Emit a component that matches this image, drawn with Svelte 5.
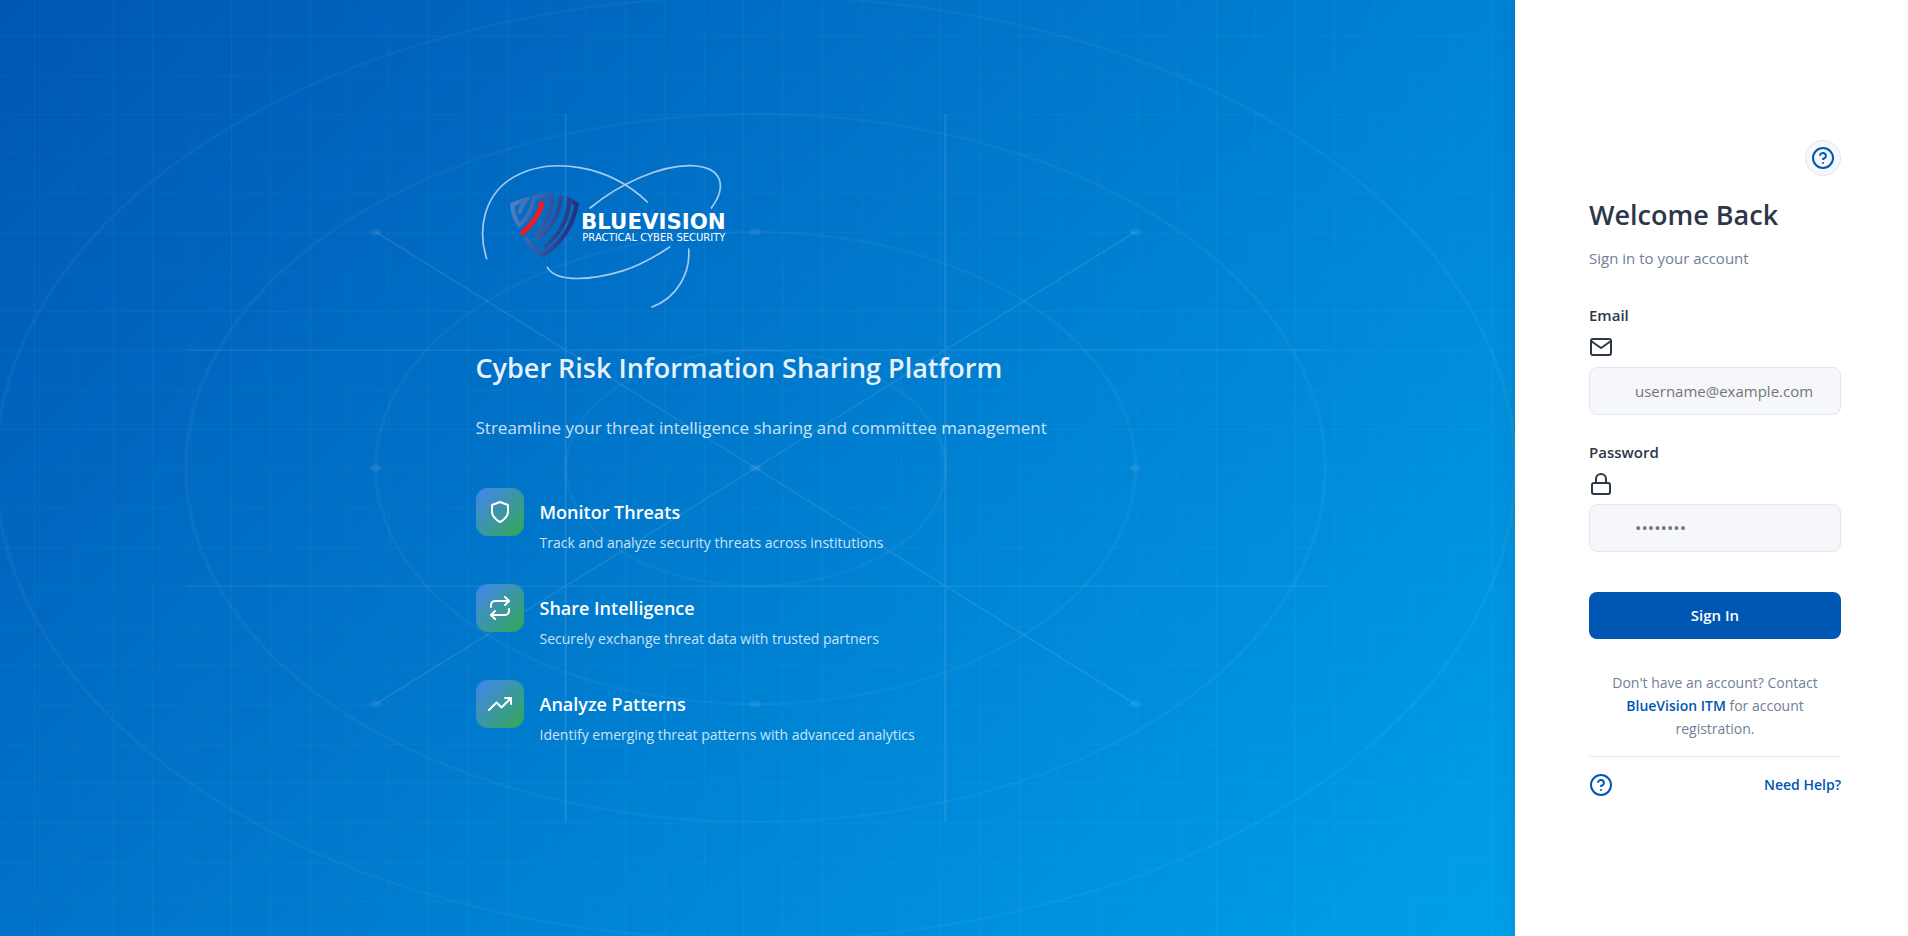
<script>
  const columns = Array.from({ length: 38 }, (_, i) => 34.5 + i * 39.4);
  const rows = Array.from({ length: 23 }, (_, i) => 36 + i * 39.35);
  const nodes = [200, 400, 600].flatMap((y) => [200, 400, 600].map((x) => ({ x, y })));

  const features = [
    {
      title: 'Monitor Threats',
      text: 'Track and analyze security threats across institutions',
      paths: ['M12 22s8-4 8-10V5l-8-3-8 3v7c0 6 8 10 8 10z']
    },
    {
      title: 'Share Intelligence',
      text: 'Securely exchange threat data with trusted partners',
      paths: ['M17 1l4 4-4 4', 'M3 11V9a4 4 0 0 1 4-4h14', 'M7 23l-4-4 4-4', 'M21 13v2a4 4 0 0 1-4 4H3']
    },
    {
      title: 'Analyze Patterns',
      text: 'Identify emerging threat patterns with advanced analytics',
      paths: ['M23 6l-9.500 9.500-5-5L1 18', 'M17 6h6v6']
    }
  ];

  let email = $state('');
  let password = $state('');
</script>

{#snippet helpIcon()}
  <svg class="icon" viewBox="0 0 24 24" aria-hidden="true">
    <circle cx="12" cy="12" r="10" />
    <path d="M9.090 9a3 3 0 0 1 5.830 1c0 2-3 3-3 3" />
    <path d="M12 17h.01" />
  </svg>
{/snippet}

<div class="page">
  <section class="brand">
    <svg class="grid" viewBox="0 0 1515 936" preserveAspectRatio="none" aria-hidden="true">
      {#each columns as x}
        <line x1={x} x2={x} y1="0" y2="936" />
      {/each}
      {#each rows as y}
        <line x1="0" x2="1515" y1={y} y2={y} />
      {/each}
    </svg>
    <svg class="radar" viewBox="0 0 800 800" preserveAspectRatio="none" aria-hidden="true">
      <g class="rings">
        <circle cx="400" cy="400" r="100" />
        <circle cx="400" cy="400" r="200" />
        <circle cx="400" cy="400" r="300" />
        <circle cx="400" cy="400" r="400" />
      </g>
      <path class="rays" d="M100 300H700M100 500H700M300 100V700M500 100V700M200 200L600 600M600 200L200 600" />
      {#each nodes as node}
        <circle class="node" cx={node.x} cy={node.y} r="3" />
      {/each}
    </svg>

    <div class="intro">
      <svg class="logo" viewBox="48 48 765 480" role="img" aria-label="BlueVision">
        <defs>
          <linearGradient id="shield" gradientUnits="userSpaceOnUse" x1="155" y1="220" x2="350" y2="260">
            <stop offset="0" stop-color="#4a7fc4" />
            <stop offset="0.500" stop-color="#3558a2" />
            <stop offset="1" stop-color="#262a78" />
          </linearGradient>
        </defs>
        <g class="orbits">
          <path d="M80 356C52 270 72 170 150 118C270 42 450 78 562 186" />
          <path d="M390 204C480 130 600 76 692 77C795 80 798 145 754 204" />
          <path d="M262 382C290 430 400 420 490 392C545 374 595 344 629 321" />
          <path d="M686 327C692 400 650 474 576 501" />
        </g>
        <g class="bands">
          <path d="M179 222Q178 214 184 203L199 179Q175 185 157 195Q160 232 178 256Q212 228 223 172Q252 166 276 170Q274 232 229 288" />
          <path d="M302 168Q298 246 229 301" />
          <path d="M195 292Q216 323 250 346Q334 288 350 192Q338 185 327 180Q324 266 250 324" />
        </g>
        <path class="slash" d="M248 184Q236 238 183 283" />
        <text class="wordmark" x="363" y="267">BLUEVISION</text>
        <text class="tagline" x="367" y="303">PRACTICAL CYBER SECURITY</text>
      </svg>

      <h1>Cyber Risk Information Sharing Platform</h1>
      <p class="lead">Streamline your threat intelligence sharing and committee management</p>

      <ul class="features">
        {#each features as feature}
          <li>
            <span class="tile">
              <svg class="icon" viewBox="0 0 24 24" aria-hidden="true">
                {#each feature.paths as d}
                  <path {d} />
                {/each}
              </svg>
            </span>
            <div class="copy">
              <h2>{feature.title}</h2>
              <p>{feature.text}</p>
            </div>
          </li>
        {/each}
      </ul>
    </div>
  </section>

  <main class="login">
    <button class="help" type="button" aria-label="Help">{@render helpIcon()}</button>
    <h2 class="welcome">Welcome Back</h2>
    <p class="subtitle">Sign in to your account</p>

    <form onsubmit={(event) => event.preventDefault()}>
      <div class="field">
        <label for="email">Email</label>
        <svg class="icon" viewBox="0 0 24 24" aria-hidden="true">
          <path d="M4 4h16c1.100 0 2 .9 2 2v12c0 1.100-.9 2-2 2H4c-1.100 0-2-.9-2-2V6c0-1.100.9-2 2-2z" />
          <path d="M22 6l-10 7L2 6" />
        </svg>
        <input id="email" type="email" placeholder="username@example.com" bind:value={email} />
      </div>
      <div class="field">
        <label for="password">Password</label>
        <svg class="icon" viewBox="0 0 24 24" aria-hidden="true">
          <rect x="3" y="11" width="18" height="11" rx="2" />
          <path d="M7 11V7a5 5 0 0 1 10 0v4" />
        </svg>
        <input id="password" type="password" placeholder="••••••••" bind:value={password} />
      </div>
      <button class="submit" type="submit">Sign In</button>
    </form>

    <p class="register">
      Don't have an account? Contact <a href="#contact">BlueVision ITM</a> for account registration.
    </p>
    <footer>
      {@render helpIcon()}
      <a href="#help">Need Help?</a>
    </footer>
  </main>
</div>

<style>
  :global(body) {
    margin: 0;
  }

  .page {
    display: flex;
    min-height: 100vh;
    background: #fff;
    color: #2d3748;
    font-family: 'Open Sans', 'Noto Sans', sans-serif;
  }

  h1,
  h2,
  p,
  ul {
    margin: 0;
    padding: 0;
  }

  h1,
  h2 {
    font-weight: 600;
  }

  a {
    color: #0056b3;
    font-weight: 600;
    text-decoration: none;
  }

  .icon {
    display: block;
    flex: none;
    width: 24px;
    height: 24px;
    fill: none;
    stroke: currentColor;
    stroke-width: 2;
    stroke-linecap: round;
    stroke-linejoin: round;
  }

  .brand {
    position: relative;
    flex: 1;
    display: flex;
    align-items: center;
    justify-content: center;
    overflow: hidden;
    background: linear-gradient(135deg, #0056b3 0%, #00a0e9 100%);
    color: #fff;
  }

  .grid,
  .radar {
    position: absolute;
    top: 0;
    left: 0;
    width: 100%;
    height: 100%;
    fill: none;
    stroke: #fff;
  }

  .grid {
    stroke-opacity: 0.04;
  }

  .radar {
    top: -4px;
    left: -4px;
    width: calc(100% + 4px);
    height: calc(100% + 8px);
  }

  .rings {
    stroke-opacity: 0.04;
    stroke-width: 2;
  }

  .rays {
    stroke-opacity: 0.1;
  }

  .node {
    fill: #fff;
    fill-opacity: 0.08;
    stroke: none;
  }

  .intro {
    position: relative;
    width: 564px;
    padding-bottom: 44px;
  }

  .logo {
    display: block;
    width: 255px;
    height: 160px;
  }

  .orbits {
    fill: none;
    stroke: #a6cbf0;
    stroke-width: 5;
    stroke-linecap: round;
  }

  .bands,
  .slash {
    fill: none;
    stroke: url(#shield);
    stroke-width: 13;
  }

  .slash {
    stroke: #ed1c24;
    stroke-width: 15;
  }

  .wordmark,
  .tagline {
    fill: #fff;
    font-family: 'DejaVu Sans', sans-serif;
    font-size: 30px;
  }

  .wordmark {
    font-size: 64px;
    font-weight: 700;
  }

  h1 {
    margin-top: 32px;
    font-size: 27px;
    line-height: 40px;
    color: #e6f1fb;
  }

  .lead {
    margin-top: 26px;
    font-size: 17px;
    line-height: 28px;
    white-space: nowrap;
    color: rgba(255, 255, 255, 0.8);
  }

  .features {
    display: grid;
    gap: 40px;
    margin-top: 46px;
    list-style: none;
  }

  .features li {
    display: flex;
    gap: 16px;
  }

  .tile {
    display: grid;
    place-items: center;
    flex: none;
    width: 48px;
    height: 48px;
    border-radius: 12px;
    background: linear-gradient(135deg, #4285f4, #34a853);
  }

  .copy {
    padding-top: 8px;
    height: 48px;
  }

  .copy h2 {
    font-size: 18px;
    line-height: 32px;
  }

  .copy p {
    font-size: 14px;
    line-height: 30px;
    color: rgba(255, 255, 255, 0.8);
  }

  .login {
    position: relative;
    box-sizing: border-box;
    flex: none;
    display: flex;
    flex-direction: column;
    justify-content: center;
    width: 393px;
    padding: 0 67px 0 74px;
    background: #fff;
    box-shadow: 0 0 20px rgba(0, 0, 0, 0.1);
  }

  .help {
    display: grid;
    place-items: center;
    align-self: flex-end;
    width: 36px;
    height: 36px;
    padding: 0;
    border: 1px solid #e2e8f0;
    border-radius: 50%;
    background: #f5f7fb;
    color: #0056b3;
  }

  .welcome {
    margin-top: 20px;
    font-size: 27px;
    line-height: 38px;
  }

  .subtitle {
    margin-top: 12px;
    font-size: 15px;
    line-height: 24px;
    color: #718096;
  }

  form {
    display: flex;
    flex-direction: column;
    gap: 26px;
    margin-top: 34px;
  }

  .field {
    display: flex;
    flex-direction: column;
    gap: 8px;
  }

  label {
    font-size: 15px;
    font-weight: 600;
    line-height: 23px;
  }

  input {
    box-sizing: border-box;
    width: 100%;
    height: 48px;
    padding: 0 16px 0 45px;
    border: 1px solid #e2e8f0;
    border-radius: 8px;
    background: #f5f7fb;
    color: #2d3748;
    font: inherit;
    font-size: 15px;
  }

  input[type='password'] {
    font-size: 17px;
  }

  input::placeholder {
    color: #757575;
    opacity: 1;
  }

  .submit {
    height: 47px;
    margin-top: 14px;
    border: 0;
    border-radius: 8px;
    background: #0056b3;
    color: #fff;
    font: inherit;
    font-size: 15px;
    font-weight: 600;
  }

  .register {
    margin-top: 32px;
    font-size: 14px;
    line-height: 23px;
    text-align: center;
    color: #718096;
  }

  footer {
    display: flex;
    align-items: center;
    justify-content: space-between;
    margin-top: 16px;
    padding-top: 16px;
    border-top: 1px solid #e2e8f0;
    color: #0056b3;
    font-size: 14px;
    line-height: 24px;
  }
</style>
